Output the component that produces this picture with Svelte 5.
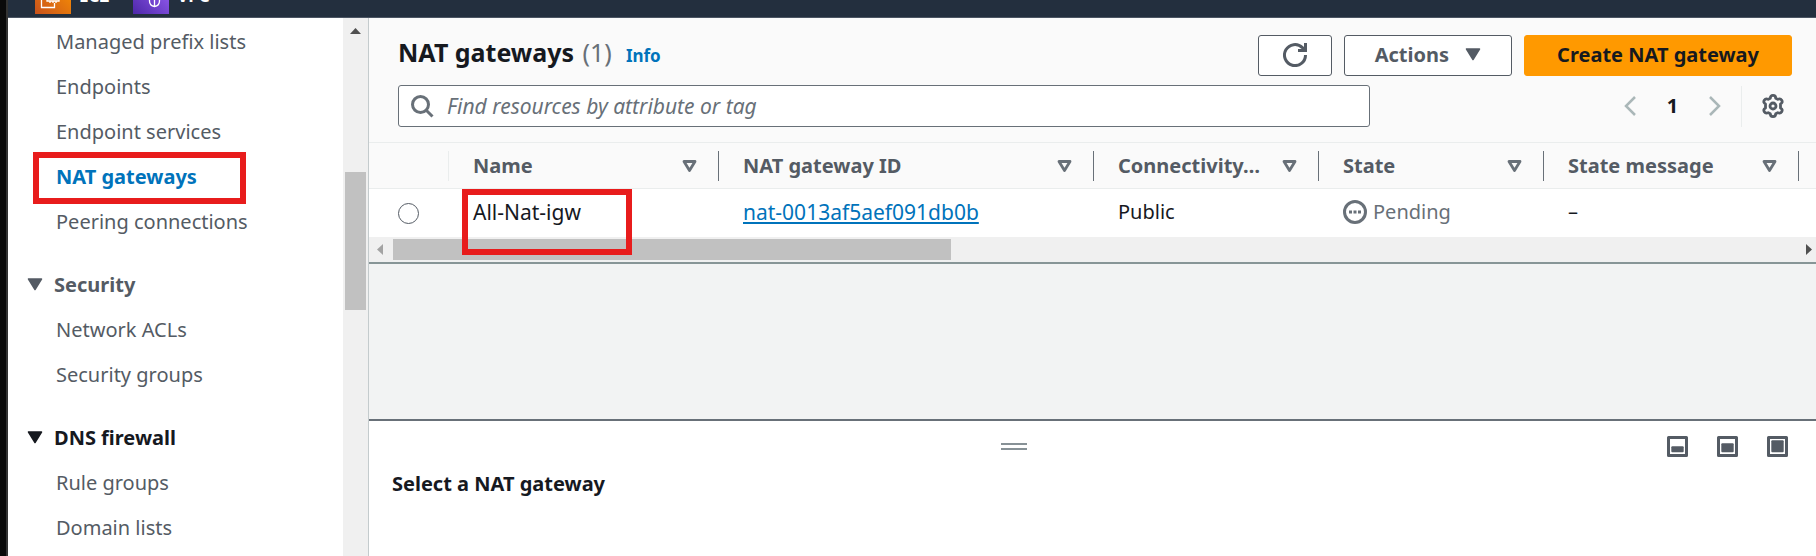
<script>
  const sections = [
    {
      title: '',
      items: ['Managed prefix lists', 'Endpoints', 'Endpoint services', 'NAT gateways', 'Peering connections'],
    },
    { title: 'Security', items: ['Network ACLs', 'Security groups'] },
    { title: 'DNS firewall', dark: true, items: ['Rule groups', 'Domain lists'] },
  ];
  const current = 'NAT gateways';
  const columns = ['Name', 'NAT gateway ID', 'Connectivity…', 'State', 'State message'];
  const layouts = [
    { label: 'Small panel', y: 10, h: 6 },
    { label: 'Medium panel', y: 7, h: 9 },
    { label: 'Full panel', y: 4, h: 12 },
  ];
  let query = $state('');
</script>

<div class="frame">
  <header class="topbar">
    <a class="service" href="#ec2">
      <svg width="36" height="36" viewBox="0 0 36 36" aria-hidden="true">
        <defs>
          <linearGradient id="ec2" x1="0" y1="1" x2="1" y2="0">
            <stop offset="0" stop-color="#c8511b" /><stop offset="1" stop-color="#f90" />
          </linearGradient>
        </defs>
        <rect width="36" height="36" fill="url(#ec2)" />
        <path d="M12 14H6.500V29.500H19.500V25M12 7h12v16H12zM14 4v3M18 4v3M22 4v3M15 23v2M18 23v2M21 23v2" fill="none" stroke="#fff" stroke-width="1.300" />
      </svg>
      <span>EC2</span>
    </a>
    <a class="service" href="#vpc">
      <svg width="36" height="36" viewBox="0 0 36 36" aria-hidden="true">
        <defs>
          <linearGradient id="vpc" x1="0" y1="1" x2="1" y2="0">
            <stop offset="0" stop-color="#4d27a8" /><stop offset="1" stop-color="#a166ff" />
          </linearGradient>
        </defs>
        <rect width="36" height="36" fill="url(#vpc)" />
        <path d="M16.500 18l5-2 5 2v5c0 3-2 5-5 5.500-3-.5-5-2.500-5-5.500zM21.500 16v12.500M7 18a5 5 0 0 1 4-8 6 6 0 0 1 11 1" fill="none" stroke="#fff" stroke-width="1.300" />
      </svg>
      <span>VPC</span>
    </a>
  </header>

  <div class="body">
    <aside>
      <nav aria-label="VPC">
        {#each sections as section}
          <section>
            {#if section.title}
              <button class="group" class:dark={section.dark}>
                <svg width="16" height="13" viewBox="0 0 16 13" aria-hidden="true">
                  <path d="M1.500 1h13L8 11.500z" fill="currentColor" stroke="currentColor" stroke-width="1.500" stroke-linejoin="round" />
                </svg>
                {section.title}
              </button>
            {/if}
            <ul>
              {#each section.items as item}
                <li>
                  <a href="#nav" class:active={item === current} aria-current={item === current ? 'page' : undefined}>{item}</a>
                  {#if item === current}<span class="mark nav-mark"></span>{/if}
                </li>
              {/each}
            </ul>
          </section>
        {/each}
      </nav>
      <div class="vscroll">
        <svg width="11" height="6" viewBox="0 0 11 6" aria-hidden="true"><path d="M0 6L5.500 0 11 6z" fill="#505050" /></svg>
        <div class="thumb"></div>
      </div>
    </aside>

    <main>
      <div class="head">
        <div class="title-row">
          <div class="title">
            <h1>NAT gateways <span>(1)</span></h1>
            <a href="#info">Info</a>
          </div>
          <div class="actions">
            <button class="btn refresh" aria-label="Refresh">
              <svg width="24" height="24" viewBox="0 0 24 24" aria-hidden="true">
                <path d="M22.500 12A10.500 10.500 0 1 1 19.400 4.600L21 6.500" fill="none" stroke="currentColor" stroke-width="3" />
                <path d="M22.500 0v7.500H15" fill="none" stroke="currentColor" stroke-width="3" />
              </svg>
            </button>
            <button class="btn menu">
              Actions
              <svg width="16" height="13" viewBox="0 0 16 13" aria-hidden="true">
                <path d="M1.500 1h13L8 11.500z" fill="currentColor" stroke="currentColor" stroke-width="1.500" stroke-linejoin="round" />
              </svg>
            </button>
            <button class="btn primary">Create NAT gateway</button>
          </div>
        </div>
        <div class="filter-row">
          <label class="search">
            <svg width="23" height="23" viewBox="0 0 23 23" aria-hidden="true">
              <circle cx="9.500" cy="9.500" r="8" fill="none" stroke="#687078" stroke-width="3" />
              <path d="M15 15l6.500 6.500" stroke="#687078" stroke-width="3" />
            </svg>
            <input type="text" placeholder="Find resources by attribute or tag" aria-label="Find resources by attribute or tag" bind:value={query} />
          </label>
          <div class="pager">
            <button aria-label="Previous page">
              <svg width="12" height="20" viewBox="0 0 12 20" aria-hidden="true"><path d="M11 1L2 10l9 9" fill="none" stroke="#aab7b8" stroke-width="2.500" /></svg>
            </button>
            <button class="page">1</button>
            <button aria-label="Next page">
              <svg width="12" height="20" viewBox="0 0 12 20" aria-hidden="true"><path d="M1 1l9 9-9 9" fill="none" stroke="#aab7b8" stroke-width="2.500" /></svg>
            </button>
            <button class="gear" aria-label="Preferences">
              <svg width="24" height="24" viewBox="0 0 24 24" aria-hidden="true">
                <path d="M9.300 4.200Q9.300 1.400 12 1.400T14.700 4.200L16.800 5.400Q19.300 4 20.700 6.300T19.500 9.900V14.100Q22.100 15.400 20.700 17.700T16.800 18.600L14.700 19.800Q14.700 22.600 12 22.600T9.300 19.800L7.200 18.600Q4.700 20 3.300 17.700T4.500 14.100V9.900Q1.900 8.600 3.300 6.300T7.200 5.400Z" fill="none" stroke="currentColor" stroke-width="2.800" stroke-linejoin="round" />
                <circle cx="12" cy="12" r="3" fill="none" stroke="currentColor" stroke-width="2.800" />
              </svg>
            </button>
          </div>
        </div>
      </div>

      <div class="table-wrap">
        <table>
          <colgroup>
            <col class="c-pick" /><col class="c-name" /><col class="c-id" /><col class="c-conn" /><col class="c-state" /><col class="c-msg" /><col />
          </colgroup>
          <thead>
            <tr>
              <th class="pick"><span class="cell"></span></th>
              {#each columns as column}
                <th scope="col">
                  <span class="cell">
                    {column}
                    <svg width="15" height="13" viewBox="0 0 15 13" aria-hidden="true">
                      <path d="M2 1.500h11L7.500 10.500z" fill="none" stroke="#687078" stroke-width="2.800" stroke-linejoin="round" />
                    </svg>
                  </span>
                </th>
              {/each}
              <td></td>
            </tr>
          </thead>
          <tbody>
            <tr>
              <td class="pick"><input type="radio" name="gateway" aria-label="All-Nat-igw" /></td>
              <td class="ident name">All-Nat-igw<span class="mark cell-mark"></span></td>
              <td class="ident"><a href="#gateway">nat-0013af5aef091db0b</a></td>
              <td>Public</td>
              <td>
                <span class="status">
                  <svg width="24" height="24" viewBox="0 0 24 24" aria-hidden="true">
                    <circle cx="12" cy="12" r="10.500" fill="none" stroke="currentColor" stroke-width="3" />
                    <path d="M6 10.500h3v3H6zM10.500 10.500h3v3h-3zM15 10.500h3v3h-3z" fill="currentColor" />
                  </svg>
                  Pending
                </span>
              </td>
              <td>–</td>
              <td></td>
            </tr>
          </tbody>
        </table>
      </div>
      <div class="hscroll">
        <svg width="6" height="11" viewBox="0 0 6 11" aria-hidden="true"><path d="M6 0L0 5.500 6 11z" fill="#a3a3a3" /></svg>
        <div class="track"><div class="bar"></div></div>
        <svg width="6" height="11" viewBox="0 0 6 11" aria-hidden="true"><path d="M0 0l6 5.500L0 11z" fill="#505050" /></svg>
      </div>

      <div class="space"></div>

      <section class="panel">
        <div class="panel-bar">
          <div class="grip-area">
            <button class="grip" aria-label="Resize panel"><i></i><i></i></button>
          </div>
          <div class="layouts">
            {#each layouts as l}
              <button aria-label={l.label}>
                <svg width="21" height="21" viewBox="0 0 21 21" aria-hidden="true">
                  <rect x="1.500" y="1.500" width="18" height="18" fill="none" stroke="#545b64" stroke-width="3" stroke-linejoin="round" />
                  <rect x="4.300" y={l.y + 0.3} width="12.400" height={l.h} rx="1" fill="#545b64" />
                </svg>
              </button>
            {/each}
          </div>
        </div>
        <h2>Select a NAT gateway</h2>
      </section>
    </main>
  </div>
</div>

<style>
  :global(body) { margin: 0; }
  * { box-sizing: border-box; }
  .frame {
    min-height: 100vh;
    display: flex;
    flex-direction: column;
    border-left: 6px solid #0a0a0a;
    box-shadow: inset 2px 0 #333;
    padding-left: 2px;
    overflow: hidden;
    font-family: "Noto Sans", "Open Sans", sans-serif;
    font-size: 20px;
    line-height: 28px;
    color: #16191f;
    background: #fff;
  }
  button { font: inherit; color: inherit; background: none; border: 0; padding: 0; margin: 0; cursor: pointer; }
  a { color: #0073bb; text-decoration: none; }
  svg { display: block; flex: none; }
  h1, h2, ul { margin: 0; padding: 0; }

  .topbar {
    height: 18px;
    flex: none;
    display: flex;
    align-items: flex-end;
    gap: 24px;
    padding: 0 27px 3px;
    overflow: hidden;
    background: #232f3e;
    border-bottom: 1px solid #4b5563;
  }
  .service { display: flex; align-items: center; gap: 8px; color: #fff; font-size: 17px; font-weight: 700; }

  .body { flex: 1; display: flex; min-height: 0; }
  aside { width: 361px; flex: none; display: flex; border-right: 1px solid #c4cbcd; }
  nav { flex: 1; display: flex; flex-direction: column; gap: 18px; padding-top: 1px; }
  ul { list-style: none; }
  li { position: relative; height: 45px; display: flex; align-items: center; padding-left: 48px; }
  li a { color: #545b64; }
  li a.active { color: #0073bb; font-weight: 700; }
  .group {
    height: 45px; display: flex; align-items: center; gap: 11px; padding-left: 19px;
    font-weight: 700; color: #545b64;
  }
  .group.dark { color: #16191f; }
  .mark { position: absolute; border: 6px solid #e81c1c; pointer-events: none; z-index: 1; }
  .nav-mark { left: 25px; top: -2px; width: 213px; height: 52px; }
  .cell-mark { left: 13px; top: 0; width: 170px; height: 66px; }

  .vscroll { width: 25px; background: #f0f0f0; display: flex; flex-direction: column; align-items: center; padding: 10px 2px 0; }
  .thumb { width: 21px; height: 138px; margin-top: 138px; background: #c1c1c1; }

  main { flex: 1; min-width: 0; display: flex; flex-direction: column; background: #f2f3f3; }
  .head { background: #fafafa; padding: 17px 24px 15px 29px; }
  .title-row { display: flex; justify-content: space-between; height: 41px; }
  .title { display: flex; align-items: baseline; gap: 14px; }
  h1 { font-size: 25px; line-height: 34px; font-weight: 700; }
  h1 span { margin-left: 2px; font-weight: 400; color: #687078; }
  .title a { font-size: 17px; font-weight: 700; }
  .actions { display: flex; gap: 12px; }
  .btn {
    height: 41px; display: flex; align-items: center; justify-content: center; padding-bottom: 2px;
    border: 1px solid #545b64; border-radius: 3px; background: #fff; color: #545b64; font-weight: 700;
  }
  .refresh { width: 74px; }
  .menu { padding: 0 30px 2px; gap: 16px; }
  .primary { padding: 0 32px 2px; background: #f90; border-color: #f90; color: #16191f; }

  .filter-row { display: flex; align-items: center; justify-content: space-between; margin-top: 9px; }
  .search {
    flex: 0 1 972px; height: 42px; display: flex; align-items: center; gap: 13px; padding: 0 12px;
    background: #fff; border: 1px solid #687078; border-radius: 3px;
  }
  .search input { flex: 1; min-width: 0; border: 0; outline: 0; padding: 0; font: inherit; font-size: 21px; background: none; color: #16191f; }
  .search input::placeholder { color: #687078; font-style: italic; opacity: 1; }
  .pager { display: flex; align-items: center; }
  .page { width: 73px; font-weight: 700; }
  .gear { height: 41px; display: flex; align-items: center; margin-left: 20px; padding: 0 7px 0 19px; border-left: 1px solid #eaeded; color: #545b64; }

  .table-wrap { flex: none; }
  table { width: 100%; border-collapse: separate; border-spacing: 0; table-layout: fixed; background: #fff; }
  .c-pick { width: 80px; }
  .c-name { width: 270px; }
  .c-id { width: 375px; }
  .c-conn, .c-state { width: 225px; }
  .c-msg { width: 255px; }
  thead th, thead td { height: 47px; padding: 8px 0 7px; background: #fafafa; border-top: 1px solid #eaeded; border-bottom: 1px solid #eaeded; }
  .cell {
    height: 30px; display: flex; align-items: center; justify-content: space-between;
    padding: 0 21px 0 24px; border-right: 1px solid #687078;
    color: #545b64; font-weight: 700; white-space: nowrap;
  }
  .pick .cell { border-color: #eaeded; }
  tbody td { height: 48px; padding: 0 24px 2px; white-space: nowrap; }
  tbody .pick { padding: 0 0 0 29px; }
  .name { position: relative; }
  .ident { font-size: 21px; }
  .ident a { text-decoration: underline; text-decoration-thickness: 2px; text-underline-offset: 2px; }
  input[type="radio"] { appearance: none; display: block; width: 21px; height: 21px; margin: 0; border: 1px solid #545b64; border-radius: 50%; background: #fff; }
  .status { display: flex; align-items: center; gap: 6px; color: #687078; }

  .hscroll {
    height: 27px; flex: none; display: flex; align-items: center; gap: 10px; padding: 0 4px 0 8px;
    background: #f0f0f0; border-bottom: 2px solid #879596;
  }
  .track { flex: 1; }
  .bar { width: 39.8%; height: 21px; background: #c1c1c1; }

  .space { flex: 1; min-height: 80px; }
  .panel { height: 137px; flex: none; background: #fff; border-top: 2px solid #687078; padding: 15px 28px 0 23px; }
  .panel-bar { display: flex; align-items: center; gap: 31px; }
  .grip-area { flex: 1; display: flex; justify-content: center; }
  .grip { display: flex; flex-direction: column; gap: 3px; }
  .grip i { width: 26px; height: 2px; background: #879196; }
  .layouts { display: flex; gap: 29px; }
  h2 { font-size: 20px; line-height: 28px; font-weight: 700; margin-top: 13px; }
</style>
